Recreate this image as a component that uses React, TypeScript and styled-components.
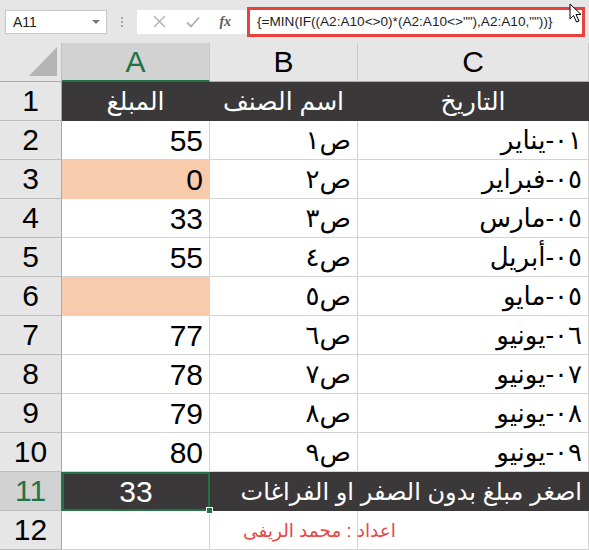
import React from "react";
import styled, { createGlobalStyle } from "styled-components";

const GlobalStyle = createGlobalStyle`
  html, body { margin: 0; padding: 0; background: #ffffff; overflow: hidden; }
  * { box-sizing: border-box; }
`;

const Window = styled.div`
  width: 589px;
  height: 550px;
  position: relative;
  overflow: hidden;
  background: #ffffff;
  font-family: "Liberation Sans", "DejaVu Sans", sans-serif;
`;

const Toolbar = styled.div`
  height: 43px;
  background: #e6e6e6;
  display: flex;
  align-items: center;
  padding-left: 5px;
  position: relative;
`;

const NameBox = styled.div`
  width: 102px;
  height: 24px;
  background: #fff;
  border: 1px solid #c6c6c6;
  display: flex;
  align-items: center;
  justify-content: space-between;
  padding: 0 6px 0 7px;
  font-size: 14px;
  color: #222;
`;

const Caret = styled.span`
  width: 0;
  height: 0;
  border-left: 4px solid transparent;
  border-right: 4px solid transparent;
  border-top: 4px solid #7a7a7a;
`;

const Grip = styled.div`
  width: 30px;
  display: flex;
  flex-direction: column;
  align-items: center;
  gap: 2px;
  span {
    width: 2px;
    height: 2px;
    background: #a8a8a8;
  }
`;

const FxButtons = styled.div`
  width: 110px;
  height: 24px;
  background: #fff;
  display: flex;
  align-items: center;
  justify-content: space-around;
  padding: 0 6px;
`;

const FxLabel = styled.span`
  font-family: "Liberation Serif", serif;
  font-style: italic;
  font-weight: bold;
  font-size: 14px;
  color: #5a5a5a;
`;

const FormulaInput = styled.div`
  width: 338px;
  height: 30px;
  border: 3px solid #e8413e;
  background: #fff;
  display: flex;
  align-items: center;
  padding-left: 7px;
  font-size: 13.6px;
  color: #1e1e1e;
  white-space: nowrap;
`;

const Cursor = styled.svg`
  position: absolute;
  left: 569px;
  top: 3px;
`;

const Sheet = styled.div`
  display: grid;
  grid-template-columns: 62px 148px 148px 231px;
  grid-auto-rows: 39px;
`;

const Corner = styled.div`
  background: #e6e6e6;
  border-right: 1px solid #c0c0c0;
  border-bottom: 1px solid #ababab;
  display: flex;
  align-items: flex-end;
  justify-content: flex-end;
  padding: 0 4px 5px 0;
`;

const Triangle = styled.div`
  width: 28px;
  height: 29px;
  background: #b4b4b4;
  clip-path: polygon(100% 0, 100% 100%, 0 100%);
`;

const ColHeader = styled.div<{ $active?: boolean }>`
  background: ${(p) => (p.$active ? "#d2d2d2" : "#e6e6e6")};
  border-right: 1px solid #c8c8c8;
  border-bottom: ${(p) => (p.$active ? "2px solid #217346" : "1px solid #ababab")};
  display: flex;
  align-items: center;
  justify-content: center;
  font-size: 30px;
  color: ${(p) => (p.$active ? "#217346" : "#000")};
  padding-top: ${(p) => (p.$active ? "1px" : "0")};
`;

const RowHeader = styled.div<{ $active?: boolean }>`
  background: ${(p) => (p.$active ? "#d2d2d2" : "#e6e6e6")};
  border-right: 1px solid ${(p) => (p.$active ? "#217346" : "#a6a6a6")};
  border-bottom: 1px solid #bcbcbc;
  display: flex;
  align-items: center;
  justify-content: center;
  font-size: 30px;
  color: ${(p) => (p.$active ? "#217346" : "#000")};
`;

const Cell = styled.div<{
  $fill?: string;
  $align?: "start" | "center" | "end";
  $color?: string;
  $size?: number;
  $span?: number;
  $rtl?: boolean;
}>`
  background: ${(p) => p.$fill || "transparent"};
  border-right: 1px solid ${(p) => p.$fill || "#d4d4d4"};
  border-bottom: 1px solid ${(p) => p.$fill || "#d4d4d4"};
  grid-column: ${(p) => (p.$span ? `span ${p.$span}` : "auto")};
  display: flex;
  align-items: center;
  justify-content: ${(p) =>
    p.$align === "center" ? "center" : p.$align === "start" ? "flex-start" : "flex-end"};
  padding: 1px 6px 0 6px;
  font-size: ${(p) => p.$size || 30}px;
  color: ${(p) => p.$color || "#000"};
  direction: ${(p) => (p.$rtl ? "rtl" : "ltr")};
  white-space: nowrap;
  overflow: visible;
`;

const SelectedCell = styled.div`
  background: #3a3838;
  border: 2px solid #217346;
  position: relative;
  display: flex;
  align-items: center;
  justify-content: center;
  font-size: 30px;
  color: #fff;
`;

const Handle = styled.span`
  position: absolute;
  right: -5px;
  bottom: -5px;
  width: 7px;
  height: 7px;
  background: #217346;
  border: 1px solid #fff;
`;

const Credit = styled.span`
  direction: rtl;
  font-size: 18.5px;
  color: #e8484a;
  margin-left: 27px;
  position: relative;
`;

const DARK = "#3a3838";
const SALMON = "#f8cbad";

const rows: { amount: string; item: string; date: string; fill?: string }[] = [
  { amount: "55", item: "١", date: "٠١-يناير" },
  { amount: "0", item: "٢", date: "٠٥-فبراير", fill: SALMON },
  { amount: "33", item: "٣", date: "٠٥-مارس" },
  { amount: "55", item: "٤", date: "٠٥-أبريل" },
  { amount: "", item: "٥", date: "٠٥-مايو", fill: SALMON },
  { amount: "77", item: "٦", date: "٠٦-يونيو" },
  { amount: "78", item: "٧", date: "٠٧-يونيو" },
  { amount: "79", item: "٨", date: "٠٨-يونيو" },
  { amount: "80", item: "٩", date: "٠٩-يونيو" },
];

export default function App() {
  return (
    <Window>
      <GlobalStyle />
      <Toolbar>
        <NameBox>
          <span>A11</span>
          <Caret />
        </NameBox>
        <Grip>
          <span />
          <span />
          <span />
        </Grip>
        <FxButtons>
          <svg width="13" height="13" viewBox="0 0 13 13">
            <path d="M1 1 L12 12 M12 1 L1 12" stroke="#b0b0b0" strokeWidth="1.4" fill="none" />
          </svg>
          <svg width="14" height="12" viewBox="0 0 14 12">
            <path d="M1 6.5 L5 10.5 L13 1.5" stroke="#b0b0b0" strokeWidth="1.8" fill="none" />
          </svg>
          <FxLabel>fx</FxLabel>
        </FxButtons>
        <FormulaInput>{'{=MIN(IF((A2:A10<>0)*(A2:A10<>""),A2:A10,""))}'}</FormulaInput>
        <Cursor width="14" height="21" viewBox="0 0 14 21">
          <path
            d="M1 1 L1 16 L4.5 12.5 L7.5 19 L10 18 L7 11.5 L12 11.5 Z"
            fill="#fff"
            stroke="#000"
            strokeWidth="1"
            strokeLinejoin="round"
          />
        </Cursor>
      </Toolbar>
      <Sheet>
        <Corner>
          <Triangle />
        </Corner>
        <ColHeader $active>A</ColHeader>
        <ColHeader>B</ColHeader>
        <ColHeader>C</ColHeader>

        <RowHeader>1</RowHeader>
        <Cell $fill={DARK} $align="center" $color="#fff" $rtl $size={25}>
          المبلغ
        </Cell>
        <Cell $fill={DARK} $align="center" $color="#fff" $rtl $size={25}>
          اسم الصنف
        </Cell>
        <Cell $fill={DARK} $align="center" $color="#fff" $rtl $size={25}>
          التاريخ
        </Cell>

        {rows.map((r, i) => (
          <React.Fragment key={i}>
            <RowHeader>{i + 2}</RowHeader>
            <Cell $fill={r.fill}>{r.amount}</Cell>
            <Cell $rtl $align="start" $size={26}>
              {"ص" + r.item}
            </Cell>
            <Cell $rtl $align="start" $size={26}>
              {r.date}
            </Cell>
          </React.Fragment>
        ))}

        <RowHeader $active>11</RowHeader>
        <SelectedCell>
          33
          <Handle />
        </SelectedCell>
        <Cell $fill={DARK} $span={2} $rtl $align="start" $color="#fff" $size={24}>
          اصغر مبلغ بدون الصفر او الفراغات
        </Cell>

        <RowHeader>12</RowHeader>
        <Cell />
        <Cell $align="start">
          <Credit>اعداد : محمد الريفى</Credit>
        </Cell>
        <Cell />
      </Sheet>
    </Window>
  );
}
